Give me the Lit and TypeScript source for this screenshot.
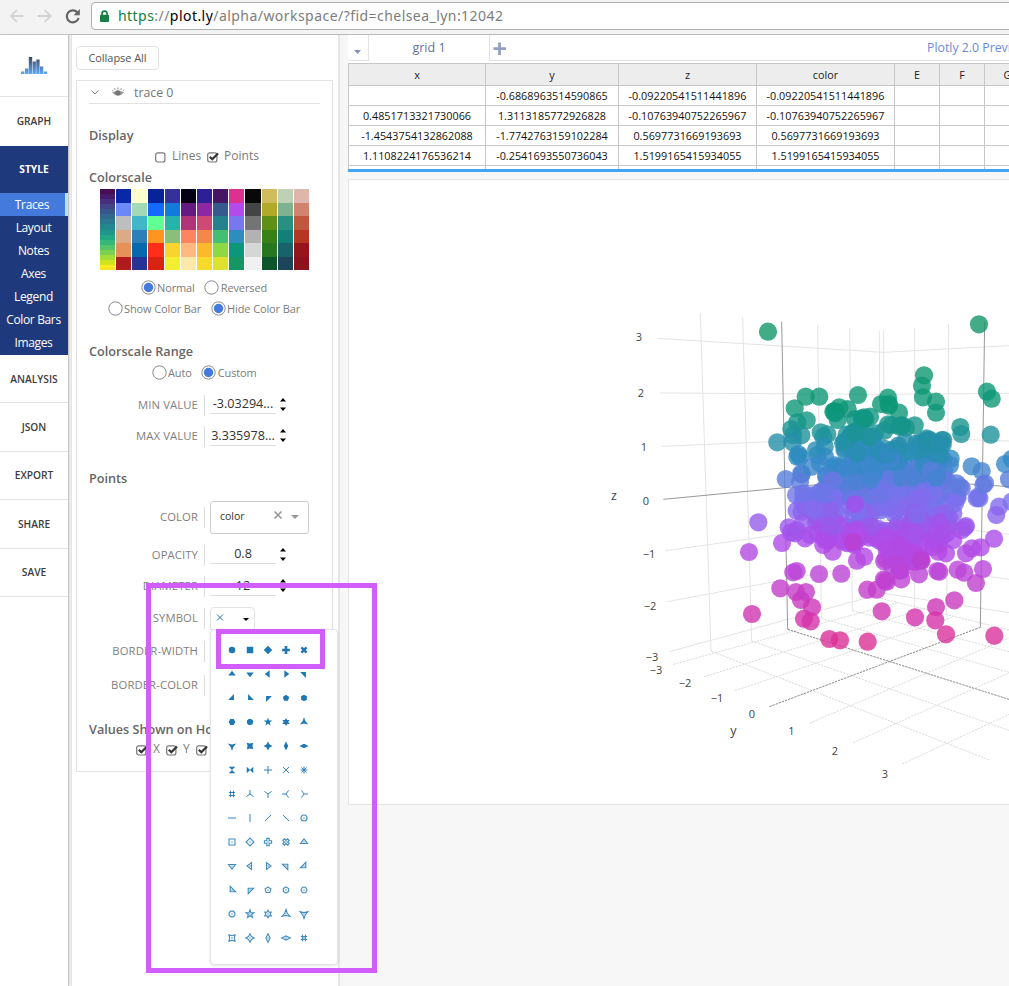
import { LitElement, html, svg, css } from "lit";
import { customElement } from "lit/decorators.js";

const SCALES: string[][] = [
  ["#440f54","#481a6c","#472f7d","#414487","#39568c","#31688e","#2a788e","#23888e","#1f988b","#22a884","#35b779","#54c568","#7ad151","#a5db36","#d2e21b","#fde725"],
  ["#0828a8","#6a88f8","#bebebe","#dcaa84","#e69158","#b01c1e"],
  ["#ffffcc","#a1dab4","#41b6c8","#2c7fb8","#0868ac","#253494"],
  ["#08229a","#1469ff","#62ff94","#ff9422","#ff2e18","#da2212"],
  ["#36309a","#127ada","#26b4aa","#88c07a","#fad42e","#f4ee30"],
  ["#030212","#641a80","#b23478","#fc8461","#feb880","#fce9aa"],
  ["#2e2094","#8e28a2","#cc4a74","#f4884a","#fdb92c","#f8da2c"],
  ["#461564","#375a8e","#24828e","#44be70","#8ed844","#dee22c"],
  ["#dd318f","#b34bea","#7877ed","#2e8dbf","#0c977a","#149763"],
  ["#080808","#444444","#747474","#b2b2b2","#d6d6d6","#f0f0f0"],
  ["#d0bc5e","#b0aa28","#5e9018","#388018","#26781e","#0e542c"],
  ["#bed0b6","#7eb290","#289080","#108078","#18626c","#1e445a"],
  ["#deb6ac","#d08470","#be583c","#b23822","#94161a","#8c121c"],
];

const poly = (pts: number[][]) => "M" + pts.map((p) => p.map((n) => n.toFixed(2)).join(",")).join("L") + "Z";
const ring = (n: number, r: number, start = -90, inner = 0) => {
  const out: number[][] = [];
  const total = inner ? n * 2 : n;
  for (let i = 0; i < total; i++) {
    const a = ((start + (i * 360) / total) * Math.PI) / 180;
    const q = inner && i % 2 ? inner : r;
    out.push([q * Math.cos(a), q * Math.sin(a)]);
  }
  return poly(out);
};
const R = 3;
const CIRCLE = `M${R},0A${R},${R} 0 1,1 0,-${R}A${R},${R} 0 0,1 ${R},0Z`;
const CROSS = poly([[1.2,-3.6],[1.2,-1.2],[3.6,-1.2],[3.6,1.2],[1.2,1.2],[1.2,3.6],[-1.2,3.6],[-1.2,1.2],[-3.6,1.2],[-3.6,-1.2],[-1.2,-1.2],[-1.2,-3.6]]);
const XMARK = poly([[0,-1.6],[1.6,-3.2],[3.2,-1.6],[1.6,0],[3.2,1.6],[1.6,3.2],[0,1.6],[-1.6,3.2],[-3.2,1.6],[-1.6,0],[-3.2,-1.6],[-1.6,-3.2]]);
const SOLID: string[] = [
  CIRCLE,
  "M-3,-3H3V3H-3Z",
  poly([[0,-3.9],[3.9,0],[0,3.9],[-3.9,0]]),
  CROSS,
  XMARK,
  "M-3.5,1.5H3.5L0,-3Z",
  "M-3.5,-1.5H3.5L0,3Z",
  "M1.5,-3.5V3.5L-3,0Z",
  "M-1.5,-3.5V3.5L3,0Z",
  "M-3.6,-1.8H1.8V3.6Z",
  "M1.8,-3.6V1.8H-3.6Z",
  "M3.6,1.8H-1.8V-3.6Z",
  "M-1.8,3.6V-1.8H3.6Z",
  ring(5, 3.1),
  ring(6, 3.1),
  ring(6, 3.1, 0),
  ring(8, 3.1, 22.5),
  ring(5, 4.2, -90, 1.7),
  ring(6, 3.8, -90, 2.1),
  ring(3, 4.6, -90, 1.5),
  ring(3, 4.6, 90, 1.5),
  ring(4, 4.4, 45, 2.2),
  ring(4, 4.2, 0, 2.1),
  poly([[0,-4.2],[2.1,0],[0,4.2],[-2.1,0]]),
  poly([[-4.2,0],[0,-2.1],[4.2,0],[0,2.1]]),
  "M-3,3H3L-3,-3H3Z",
  "M3,3V-3L-3,3V-3Z",
];
const LINES: string[] = [
  "M0,-4V4M-4,0H4",
  "M-3,-3L3,3M-3,3L3,-3",
  "M0,-3.5V3.5M-3.5,0H3.5M-2.5,-2.5L2.5,2.5M-2.5,2.5L2.5,-2.5",
  "M-1.5,-3.2V3.2M1.5,-3.2V3.2M-3.2,-1.5H3.2M-3.2,1.5H3.2",
  "M-3.6,2.6L0,0L3.6,2.6M0,0V-4",
  "M-3.6,-2.6L0,0L3.6,-2.6M0,0V4",
  "M2.6,3.6L0,0L2.6,-3.6M0,0H-4",
  "M-2.6,3.6L0,0L-2.6,-3.6M0,0H4",
  "M-4,0H4",
  "M0,-4V4",
  "M3,-3L-3,3",
  "M-3,-3L3,3",
];
const OPEN: string[] = SOLID.slice(0, 25).concat([LINES[3]]);

// Vertical screen position against marker colour, top of the z axis first.
const RAMP: [number, number[]][] = [
  [325, [20, 151, 104]],
  [410, [12, 151, 120]],
  [428, [24, 149, 140]],
  [446, [40, 142, 178]],
  [462, [52, 138, 200]],
  [480, [88, 126, 218]],
  [500, [122, 114, 238]],
  [520, [146, 96, 236]],
  [540, [174, 76, 234]],
  [560, [182, 72, 224]],
  [590, [196, 62, 202]],
  [612, [208, 52, 178]],
  [650, [224, 48, 142]],
];
const tint = (y: number) => {
  const v = Math.max(325, Math.min(650, y));
  let i = 0;
  while (i < RAMP.length - 2 && v > RAMP[i + 1][0]) i++;
  const [y0, a] = RAMP[i];
  const [y1, b] = RAMP[i + 1];
  const t = (v - y0) / (y1 - y0);
  return `rgb(${a.map((c, k) => Math.round(c + (b[k] - c) * t)).join(",")})`;
};

const UPPER: number[][] = [
  [114,95],[747,73],[582,226],[576,257],[579,292],[618,305],[618,338],[771,275],[785,296],[227,290],[268,290],[384,285],[194,325],
  [474,293],[453,312],[477,317],[507,338],[353,327],[328,322],[310,335],[316,340],[314,333],[323,360],[375,357],[395,355],[405,358],[420,350],[398,362],[402,352],
  [230,361],[202,367],[184,387],[214,406],[190,405],[142,427],[188,427],[205,462],[210,470],[202,470],[272,397],[292,403],[280,410],[284,440],[262,465],[285,470],[258,450],
  [554,376],[515,375],[475,373],[485,375],[463,392],[527,383],[510,380],[429,410],[350,404],[365,400],[375,395],[385,395],[372,405],[360,410],[395,405],[435,400],[691,381],[694,402],[782,404],
  [505,437],[525,425],[560,430],[590,415],[600,420],[625,430],[640,420],[638,435],[610,440],[575,425],[630,440],[570,435],[590,430],[635,420],[580,440],
  [662,476],[660,495],[640,480],[725,499],[755,513],[825,492],[845,477],[167,537],[215,523],[214,520],[210,545],[837,538],[765,550],[245,500],[270,490],[460,445],[500,445],[525,455],
];
const LOWER: number[][] = [
  [198,75],[222,80],[225,90],[220,70],[265,70],[272,65],[200,122],[215,125],[260,120],[250,115],[85,157],[57,246],[156,219],[66,432],[176,172],[183,187],[195,190],[218,160],
  [225,205],[200,180],[262,190],[240,195],[280,225],[308,245],[283,205],[285,210],[300,170],[200,303],[190,307],[267,312],[334,311],[151,355],[198,366],[213,390],[228,366],[246,412],
  [222,446],[242,454],[298,507],[330,511],[413,515],[455,424],[555,442],[618,411],[616,451],[648,493],[673,391],[793,497],[412,359],[440,359],[465,333],[462,328],[470,335],
  [514,328],[510,298],[515,300],[508,302],[485,285],[567,313],[575,272],[570,268],[622,303],[628,305],[683,299],[703,308],[738,339],[759,297],[708,250],[726,235],[752,232],[792,206],
  [708,168],[704,172],[695,180],[690,50],[695,55],[680,40],[670,130],[675,100],[740,85],[748,85],[744,80],[760,45],[807,110],[799,135],[845,95],[381,272],[403,260],[368,215],[370,220],[373,225],
  [648,250],[625,245],[670,210],[650,190],[635,200],[340,215],[555,190],[545,260],[470,240],
];
const HEAVY: number[][] = [
  [314,335],[400,358],[477,312],[375,398],[590,420],[625,432],[515,378],
];

// Bands of the crowded core: y from, y to, x from, x to, marker count.
const BANDS = [
  [437, 451, 842, 880, 14],
  [448, 466, 852, 900, 34],
  [450, 468, 905, 942, 16],
  [462, 482, 826, 905, 52],
  [466, 484, 898, 944, 28],
  [480, 500, 825, 948, 70],
  [494, 514, 800, 958, 60],
  [512, 530, 816, 874, 28],
  [512, 530, 898, 950, 30],
  [526, 544, 826, 880, 22],
  [528, 548, 882, 940, 40],
  [544, 562, 884, 924, 22],
];
interface Dot { x: number; y: number; c: string; }
const DOTS: Dot[] = (() => {
  let s = 4217;
  const rnd = () => ((s = (s * 1103515245 + 12345) % 2147483648), s / 2147483648);
  const core: Dot[] = [];
  for (const [y0, y1, x0, x1, n] of BANDS)
    for (let i = 0; i < n; i++) {
      const x = x0 + rnd() * (x1 - x0);
      const y = y0 + rnd() * (y1 - y0);
      core.push({ x, y, c: tint(y + (rnd() - 0.5) * 22) });
    }
  const keyed = core.map((d) => ({ d, k: rnd() }));
  keyed.sort((a, b) => a.k - b.k);
  const mk = (px: number, py: number, top: number): Dot => {
    const x = 730 + px / 3;
    const y = top + py / 3;
    return { x, y, c: tint(y) };
  };
  return [
    ...UPPER.map(([x, y]) => mk(x, y, 300)),
    ...keyed.map((k) => k.d),
    ...LOWER.map(([x, y]) => mk(x, y, 470)),
    ...HEAVY.map(([x, y]) => mk(x, y, 300)),
    { x: 855, y: 504, c: "rgb(160,80,236)" },
    { x: 853, y: 542, c: "rgb(186,64,208)" },
    { x: 921, y: 560, c: "rgb(186,64,208)" },
  ];
})();

// Grid segments in thirds of a pixel from the point (600, 300).
const GRID = [
  "M301,40L333,1053", "M428,52L455,1023", "M653,75L664,955", "M749,83L757,932", "M838,92L842,880", "M851,92L853,880", "M944,83L944,930", "M1046,72L1040,955",
  "M173,115L850,157L1227,137", "M180,279L850,283L1227,280", "M185,439L845,411L1227,423", "M197,752L850,660L1227,703", "M203,905L850,784L1227,838", "M208,1055L850,880L1227,938",
];
const FLOOR = [
  "M220,1093L895,907", "M312,1130L975,925", "M405,1172L1056,952", "M628,1270L1227,1014", "M760,1328L1227,1119", "M907,1392L1227,1243",
  "M333,1053L1168,1380", "M455,1023L1227,1291", "M664,955L1227,1117", "M757,932L1227,1055", "M842,895L1227,990",
];
const ZERO = ["M545,65L563,988", "M1154,65L1141,982", "M190,598L850,535L1227,560"];
const ZERO_FLOOR = ["M508,1220L1141,982", "M563,988L1227,1198"];
const TICKS: [string, number, number, number][] = [
  ["3",639,341,11],["2",641,397,11],["1",644,451,11],["0",646,505,11],["−1",649,558,11],["−2",650,610,11],["−3",652,661,11],
  ["−3",656,674,11],["−2",685,687,11],["−1",717,702,11],["0",752,718,11],["1",791.5,735,11],["2",835,755,11],["3",885,778,11],
  ["z",614,500,12.5],["y",733.5,735,12.5],
];

const HEAD = ["x", "y", "z", "color", "E", "F", "G"];
const ROWS = [
  ["", "-0.6868963514590865", "-0.09220541511441896", "-0.09220541511441896", "", "", ""],
  ["0.4851713321730066", "1.3113185772926828", "-0.10763940752265967", "-0.10763940752265967", "", "", ""],
  ["-1.4543754132862088", "-1.7742763159102284", "0.5697731669193693", "0.5697731669193693", "", "", ""],
  ["1.1108224176536214", "-0.2541693550736043", "1.5199165415934055", "1.5199165415934055", "", "", ""],
  ["", "", "", "", "", "", ""],
];

@customElement("browser-bar")
export class BrowserBar extends LitElement {
  static styles = css`
    :host { display: flex; align-items: flex-start; height: 35px; box-sizing: border-box; background: #f3f3f3; border-bottom: 1px solid #b9b9b9; padding: 2px 0 0 8px; overflow: hidden; }
    .nav { flex: none; width: 83px; height: 28px; display: block; }
    .field { flex: none; width: 940px; height: 28px; box-sizing: border-box; background: #fff; border: 1px solid #b0b0b0; border-radius: 4px; display: flex; align-items: center; padding-left: 8px; }
    .lock { flex: none; width: 9px; height: 12px; margin-right: 9px; }
    .url { font: 14px/20px "Noto Sans", sans-serif; letter-spacing: 0.45px; color: #7d7d7d; white-space: pre; }
    .safe { color: #0b8043; }
    .domain { color: #000; }
  `;
  render() {
    return html`
      <svg class="nav" viewBox="8 2 83 28" fill="none">
        <path d="M23.5 16H11M17 9.8L10.8 16L17 22.2M38 16H50.5M44.5 9.8L50.7 16L44.5 22.2" stroke="#d4d4d4" stroke-width="1.8" />
        <path d="M77.3 12.3A6 6 0 1 0 78.6 18" stroke="#656565" stroke-width="2.2" />
        <path d="M79.8 9V15.2H73.6Z" fill="#656565" />
      </svg>
      <div class="field">
        <svg class="lock" viewBox="0 0 9 12"><path d="M2 5.5V3.6a2.5 2.5 0 0 1 5 0V5.5" fill="none" stroke="#188045" stroke-width="1.6" /><rect y="4.8" width="9" height="7.2" rx=".8" fill="#188045" /></svg>
        <span class="url"><span class="safe">https</span>://<span class="domain">plot.ly</span>/alpha/workspace/?fid=chelsea_lyn:12042</span>
      </div>
    `;
  }
}

@customElement("side-nav")
export class SideNav extends LitElement {
  static styles = css`
    :host { display: flex; flex-direction: column; flex: none; width: 68px; background: #fff; font-family: "Open Sans", sans-serif; border-right: 1px solid #c4c4c4; box-shadow: 1px 0 2px #ddd; }
    .logo { height: 62px; border-bottom: 1px solid #e2e2e2; display: flex; justify-content: center; box-sizing: border-box; padding: 22px 0 0 0; }
    .logo svg { width: 26px; height: 17px; }
    .item { box-sizing: border-box; height: 48.4px; border-bottom: 1px solid #e4e4e4; display: flex; align-items: center; justify-content: center; font-size: 10.2px; font-weight: 600; color: #3d3d3d; }
    .first { height: 49px; border: 0; padding-bottom: 2px; }
    .group { background: #1f3a7c; color: #fff; height: 209px; }
    .style { height: 47px; display: flex; align-items: center; justify-content: center; font-size: 10.2px; font-weight: 700; padding-bottom: 1px; box-sizing: border-box; }
    .sub { height: 23px; display: flex; align-items: center; justify-content: center; font-size: 12px; letter-spacing: -0.35px; box-sizing: border-box; white-space: nowrap; padding-right: 1px; }
    .on { background: #447adb; border-right: 3px solid #b4e4fb; padding-right: 1px; }
  `;
  render() {
    return html`
      <div class="logo"><svg viewBox="0 0 26 17"><defs><linearGradient id="g" x1="0" y1="0" x2="0" y2="17" gradientUnits="userSpaceOnUse"><stop offset="0" stop-color="#384a64" /><stop offset="1" stop-color="#60a8fa" /></linearGradient></defs><path fill="url(#g)" d="M0 14.5h3.4V17H0zM4 11.5h3.4V17H4zM7.8 0h3.4v17H7.8zM11.7 4.6h3.2V17h-3.2zM15.3 2.4h3.3V17h-3.3zM19 9.4h3.2V17H19zM22.8 14.5H26V17h-3.2z" /></svg></div>
      <div class="item first">GRAPH</div>
      <div class="group">
        <div class="style">STYLE</div>
        ${["Traces", "Layout", "Notes", "Axes", "Legend", "Color Bars", "Images"].map((t, i) => html`<div class=${i ? "sub" : "sub on"}>${t}</div>`)}
      </div>
      ${["ANALYSIS", "JSON", "EXPORT", "SHARE", "SAVE"].map((t) => html`<div class="item">${t}</div>`)}
    `;
  }
}

@customElement("symbol-menu")
export class SymbolMenu extends LitElement {
  static styles = css`
    :host { display: grid; grid-template-columns: repeat(5, 18px); grid-auto-rows: 24px; box-sizing: border-box; width: 128px; height: 336px; padding: 8px 0 0 12px; background: #fff; border: 1px solid #e4e4e4; border-radius: 4px; box-shadow: 0 1px 3px rgba(0,0,0,.1); }
    svg { width: 18px; height: 24px; display: block; }
    .solid { fill: #1f77b4; }
    .line { fill: none; stroke: #1f77b4; stroke-width: 1; opacity: .9; }
    .open { fill: none; stroke: #1f77b4; stroke-width: 1.1; opacity: .85; }
    .dot { fill: #1f77b4; opacity: .7; }
  `;
  render() {
    const cell = (inner: unknown) => html`<svg viewBox="-9 -12 18 24">${inner}</svg>`;
    return html`
      ${SOLID.map((d) => cell(svg`<path class="solid" d=${d} transform="scale(1.08)" />`))}
      ${LINES.map((d) => cell(svg`<path class="line" d=${d} />`))}
      ${OPEN.map((d) => cell(svg`<path class="open" d=${d} /><circle class="dot" r=".8" />`))}
    `;
  }
}

@customElement("trace-panel")
export class TracePanel extends LitElement {
  static styles = css`
    :host { display: block; position: relative; flex: none; width: 267px; margin-left: 2px; box-sizing: border-box; border-left: 1px solid #e4e4e4; padding: 11px 0 0 4px; background: #fff; font-family: "Open Sans", sans-serif; color: #666; }
    .collapse { width: 83px; height: 24px; box-sizing: border-box; border: 1px solid #e2e2e2; border-radius: 4px; font-size: 11px; line-height: 22px; letter-spacing: -.05px; text-align: center; color: #555; }
    .card { width: 257px; height: 692px; box-sizing: border-box; margin-top: 10px; border: 1px solid #e2e2e2; padding: 0 12px; }
    .head { height: 23px; box-sizing: border-box; border-bottom: 1px solid #e2e2e2; display: flex; align-items: center; font-size: 12.3px; color: #777; }
    .chev { width: 8px; height: 5px; margin: 0 12px 0 2px; }
    .eye { width: 14px; height: 10px; margin-right: 9px; }
    h3 { margin: 0; height: 20px; font-size: 12.65px; line-height: 20px; font-weight: 600; color: #666; white-space: nowrap; }
    .display { margin-top: 21px; }
    .range { margin-top: 22px; }
    .points { margin-top: 21px; }
    .values { margin-top: 23px; }
    .checks { display: flex; align-items: center; height: 20px; margin-top: 2px; font-size: 12px; line-height: 18px; color: #7a7a7a; }
    .show { padding-left: 66px; }
    .hover { margin-top: 1px; padding-left: 47px; }
    .box { width: 13px; height: 12px; flex: none; }
    .show .box { margin-right: 4px; }
    .show span { margin: -2px 6px 0 0; }
    .hover .box { margin-right: 4px; }
    .hover span { width: 13px; margin-top: -2px; }
    .scales { display: flex; gap: 1px; margin: 2px 0 0 11px; width: 209px; height: 81px; }
    .scale { flex: 1; display: flex; flex-direction: column; }
    .chip { flex: 1; }
    .radios { display: flex; align-items: center; height: 20px; font-size: 11px; letter-spacing: -.12px; color: #7c7c7c; white-space: nowrap; }
    .dir { margin-top: 7px; padding-left: 51.5px; }
    .bar { margin-top: 1px; padding-left: 18.5px; padding-bottom: 1px; }
    .mode { margin-top: 1px; padding-left: 62.5px; padding-bottom: 1px; }
    .radio { width: 15px; height: 15px; flex: none; margin-right: 1.5px; }
    .radios span { margin-right: 9.5px; }
    .row { display: flex; align-items: center; height: 22px; margin-top: 11px; }
    .lab { width: 109px; text-align: right; font-size: 11.3px; line-height: 20px; letter-spacing: .1px; color: #7f7f7f; padding-right: 6px; border-right: 1px solid #dedede; flex: none; height: 21px; white-space: nowrap; }
    .num { width: 66px; height: 20px; box-sizing: border-box; margin: -2px 0 0 5px; border-bottom: 1px solid #dedede; text-align: center; font-size: 12.6px; line-height: 19px; color: #333; white-space: nowrap; }
    .low { margin-top: 0; }
    .spin { width: 6px; height: 13px; margin: -1px 0 0 4px; }
    .tall { height: 34px; margin-top: 12px; }
    .select { width: 99px; height: 33px; box-sizing: border-box; margin-left: 5px; border: 1px solid #ccc; border-radius: 3px; display: flex; align-items: center; padding: 0 8px 2px 9px; font-size: 10.5px; color: #333; justify-content: space-between; }
    .select svg { width: 27px; height: 10px; margin-top: -2px; }
    .pick { width: 45px; height: 23px; box-sizing: border-box; margin-left: 5px; border: 1px solid #e2e2e2; border-radius: 4px 4px 0 0; display: flex; }
    .menu { position: absolute; left: 138px; top: 594px; }
  `;
  box(on: boolean) {
    return html`<svg class="box" viewBox="0 0 13 12"><rect x=".7" y="1.8" width="9.2" height="9.2" rx="2" fill="#fff" stroke="#777" stroke-width="1.2" />${on ? svg`<path d="M2.8 5.8L5.3 8.3L11 2.4" fill="none" stroke="#333" stroke-width="2.2" />` : ""}</svg>`;
  }
  radio(on: boolean) {
    return html`<svg class="radio" viewBox="0 0 15 15"><circle cx="7.5" cy="7.5" r="6.7" fill="#fff" stroke="#8a8a8a" />${on ? svg`<circle cx="7.5" cy="7.5" r="4.7" fill="#447adb" />` : ""}</svg>`;
  }
  number(label: string, value: string, gap: number, low = false) {
    return html`<div class="row" style="margin-top:${gap}px"><div class="lab">${label}</div><div class=${low ? "num low" : "num"}>${value}</div>
      <svg class="spin" viewBox="0 0 6 13"><path d="M0 3.5L3 0L6 3.5ZM0 9.5L3 13L6 9.5Z" fill="#000" /></svg></div>`;
  }
  render() {
    return html`
      <div class="collapse">Collapse All</div>
      <div class="card">
        <div class="head">
          <svg class="chev" viewBox="0 0 8 5"><path d="M.5 .5L4 4L7.5 .5" fill="none" stroke="#888" /></svg>
          <svg class="eye" viewBox="0 0 14 10"><path d="M1 5.5Q7 12 13 5.5Q10 3.8 7 3.8T1 5.5Z" fill="#999" /><circle cx="7" cy="5.8" r="2.6" fill="#777" /><path d="M1.2 3.2L2.2 4.2M3.5 1.2L4.3 3M7 .5V2.6M10.5 1.2L9.7 3M12.8 3.2L11.8 4.2" stroke="#888" stroke-width=".9" /></svg>
          <span>trace 0</span>
        </div>
        <h3 class="display">Display</h3>
        <div class="checks show">${this.box(false)}<span>Lines</span>${this.box(true)}<span>Points</span></div>
        <h3>Colorscale</h3>
        <div class="scales">${SCALES.map((s) => html`<div class="scale">${s.map((c) => html`<div class="chip" style="background:${c}"></div>`)}</div>`)}</div>
        <div class="radios dir">${this.radio(true)}<span>Normal</span>${this.radio(false)}<span>Reversed</span></div>
        <div class="radios bar">${this.radio(false)}<span>Show Color Bar</span>${this.radio(true)}<span>Hide Color Bar</span></div>
        <h3 class="range">Colorscale Range</h3>
        <div class="radios mode">${this.radio(false)}<span>Auto</span>${this.radio(true)}<span>Custom</span></div>
        ${this.number("MIN VALUE", "-3.03294...", 11)} ${this.number("MAX VALUE", "3.335978...", 9, true)}
        <h3 class="points">Points</h3>
        <div class="row tall"><div class="lab">COLOR</div>
          <div class="select"><span>color</span><svg viewBox="0 0 27 10"><path d="M1.5 1.5L8.5 8.5M8.5 1.5L1.5 8.5" stroke="#999" stroke-width="1.7" /><path d="M18 5H26L22 9Z" fill="#999" /></svg></div></div>
        ${this.number("OPACITY", "0.8", 10)} ${this.number("DIAMETER", "12", 9, true)}
        <div class="row" style="margin-top:10px"><div class="lab">SYMBOL</div>
          <svg class="pick" viewBox="0 0 43 21"><path d="M6 6.5L12 12.5M12 6.5L6 12.5" stroke="#1f77b4" /><path d="M32 10H38L35 13Z" fill="#000" /></svg></div>
        <div class="row" style="margin-top:11px"><div class="lab">BORDER-WIDTH</div></div>
        <div class="row" style="margin-top:12px"><div class="lab">BORDER-COLOR</div></div>
        <h3 class="values">Values Shown on Hover</h3>
        <div class="checks hover">${this.box(true)}<span>X</span>${this.box(true)}<span>Y</span>${this.box(true)}<span>Z</span></div>
      </div>
      <symbol-menu class="menu"></symbol-menu>
    `;
  }
}

@customElement("data-grid")
export class DataGrid extends LitElement {
  static styles = css`
    :host { display: block; height: 137px; background: #fff; border-bottom: 3px solid #42a5f5; box-sizing: border-box; overflow: hidden; font-family: "Open Sans", sans-serif; }
    .tabs { display: flex; height: 26px; font-size: 12px; }
    .drop { width: 21px; box-sizing: border-box; border: solid #e2e2e2; border-width: 0 1px 1px 0; }
    .drop svg, .add svg { display: block; }
    .tab { width: 120px; text-align: center; line-height: 26px; font-size: 12.5px; color: #5f73a5; }
    .add { flex: 1; border: solid #e2e2e2; border-width: 0 0 1px 1px; display: flex; justify-content: space-between; }
    .preview { width: 82px; color: #6b8bd6; font-size: 12.3px; line-height: 26px; white-space: nowrap; }
    .table { display: grid; grid-template-columns: 137px 133px 138px 138px 45px 45px 46px; margin-top: 2px; width: 682px; border-left: 1px solid #c8c8c8; border-top: 1px solid #c8c8c8; }
    .th, .td { box-sizing: border-box; border: solid #c8c8c8; border-width: 0 1px 1px 0; text-align: center; font-size: 10.8px; color: #111; white-space: nowrap; }
    .th { height: 22px; line-height: 22px; background: #ededed; color: #222; }
    .td { height: 20px; line-height: 19px; letter-spacing: .02px; }
  `;
  render() {
    return html`
      <div class="tabs">
        <div class="drop"><svg width="20" height="25"><path d="M6 15H13L9.5 19Z" fill="#8592b4" /></svg></div>
        <div class="tab">grid 1</div>
        <div class="add"><svg width="22" height="25"><path d="M9.5 7.5V20M3.5 13.7H16" stroke="#929fbf" stroke-width="2.8" /></svg><div class="preview">Plotly 2.0 Preview</div></div>
      </div>
      <div class="table">${HEAD.map((h) => html`<div class="th">${h}</div>`)}${ROWS.flat().map((c) => html`<div class="td">${c}</div>`)}</div>
    `;
  }
}

@customElement("scatter-plot")
export class ScatterPlot extends LitElement {
  static styles = css`
    :host { display: block; height: 626px; box-sizing: border-box; border: 1px solid #e3e3e3; border-right: 0; background: #fff; margin-top: 7px; overflow: hidden; }
    svg { display: block; width: 660px; height: 624px; }
    .grid { stroke: #e4e4e4; stroke-width: 3; fill: none; }
    .floor { stroke: #dcdcdc; stroke-width: 3; stroke-dasharray: 7 3; fill: none; }
    .zero { stroke: #999; stroke-width: 3; fill: none; }
    .zerofloor { stroke: #888; stroke-width: 3; stroke-dasharray: 7 3; fill: none; }
    .tick { font-family: "Open Sans", sans-serif; fill: #444; text-anchor: middle; }
  `;
  render() {
    return html`<svg viewBox="349 180 660 624">
      <g transform="translate(600 300) scale(.33333)">
        ${GRID.map((d) => svg`<path class="grid" d=${d} />`)}
        ${FLOOR.map((d) => svg`<path class="floor" d=${d} />`)}
        ${ZERO.map((d) => svg`<path class="zero" d=${d} />`)}
        ${ZERO_FLOOR.map((d) => svg`<path class="zerofloor" d=${d} />`)}
      </g>
      ${DOTS.map((d) => svg`<circle cx=${d.x.toFixed(1)} cy=${d.y.toFixed(1)} r="9.1" fill=${d.c} fill-opacity=".8" />`)}
      ${TICKS.map(([t, x, y, s]) => svg`<text class="tick" x=${x} y=${y} font-size=${s}>${t}</text>`)}
    </svg>`;
  }
}

@customElement("app-root")
export class AppRoot extends LitElement {
  static styles = css`
    :host { display: flex; flex-direction: column; position: relative; width: 1009px; height: 986px; overflow: hidden; background: #f7f7f7; }
    .main { flex: 1; display: flex; min-height: 0; }
    .rail { flex: none; width: 2px; background: #e6e6e6; }
    .work { flex: 1; min-width: 0; margin-left: 8px; }
    .mark { position: absolute; box-sizing: border-box; border: 5px solid #d15dfc; }
    .outer { left: 146px; top: 583px; width: 231px; height: 390px; }
    .inner { left: 216px; top: 629px; width: 109px; height: 40px; }
  `;
  render() {
    return html`
      <browser-bar></browser-bar>
      <div class="main">
        <side-nav></side-nav>
        <trace-panel></trace-panel>
        <div class="rail"></div>
        <div class="work"><data-grid></data-grid><scatter-plot></scatter-plot></div>
      </div>
      <div class="mark outer"></div>
      <div class="mark inner"></div>
    `;
  }
}
